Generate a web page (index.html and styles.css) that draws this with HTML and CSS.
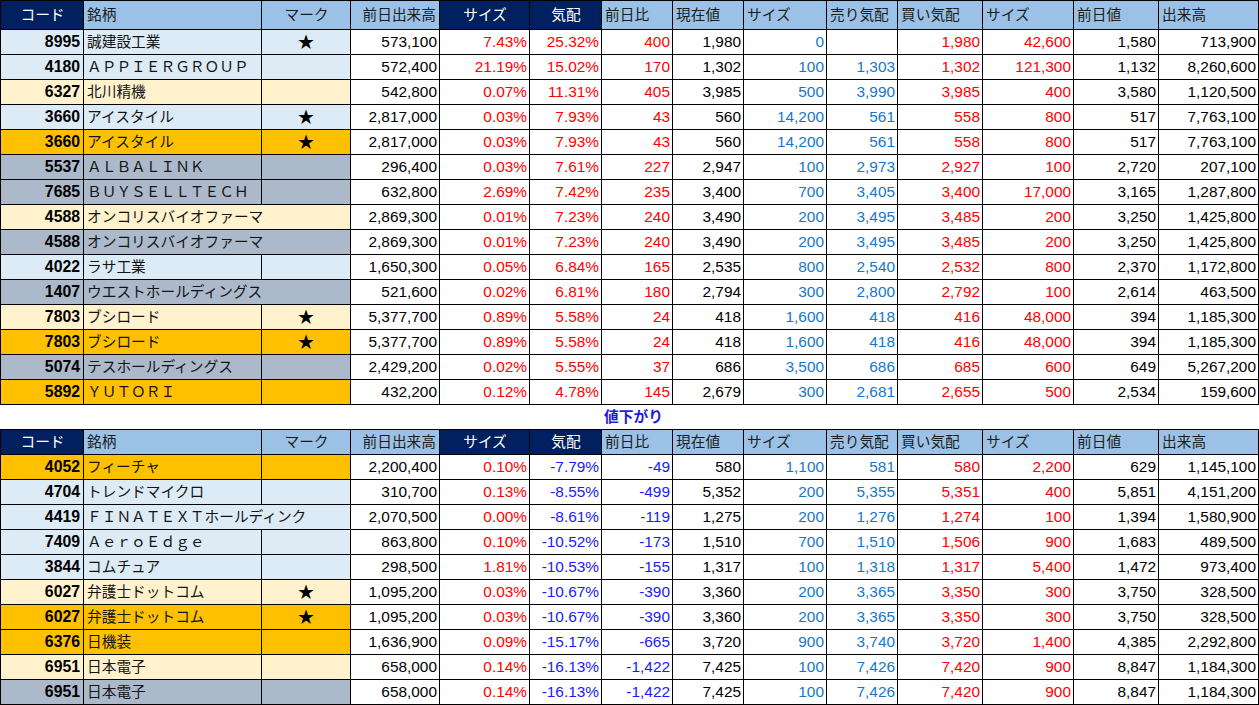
FILE: index.html
```html
<!DOCTYPE html>
<html lang="ja">
<head>
<meta charset="utf-8">
<title>値上がり・値下がり</title>
<link rel="stylesheet" href="styles.css">
</head>
<body>
<table class="grid">
<colgroup><col class="w-c"><col class="w-n"><col class="w-m"><col class="w-v"><col class="w-s"><col class="w-k"><col class="w-d"><col class="w-p"><col class="w-z"><col class="w-a"><col class="w-bid"><col class="w-z2"><col class="w-pv"><col class="w-vol"></colgroup>
<thead>
<tr class="h h1"><th class="hc">コード</th><th class="hl">銘柄</th><th class="hm">マーク</th><th class="hr">前日出来高</th><th class="hn">サイズ</th><th class="hn">気配</th><th class="hl">前日比</th><th class="hl">現在値</th><th class="hl">サイズ</th><th class="hl">売り気配</th><th class="hl">買い気配</th><th class="hl">サイズ</th><th class="hl">前日値</th><th class="hl">出来高</th></tr>
</thead>
<tbody>
<tr class="b"><td class="c">8995</td><td class="n">誠建設工業</td><td class="m">★</td><td>573,100</td><td class="r">7.43%</td><td class="r">25.32%</td><td class="r">400</td><td>1,980</td><td class="l">0</td><td class="l"></td><td class="r">1,980</td><td class="r">42,600</td><td>1,580</td><td>713,900</td></tr>
<tr class="b"><td class="c">4180</td><td class="n">ＡＰＰＩＥＲＧＲＯＵＰ</td><td class="m"></td><td>572,400</td><td class="r">21.19%</td><td class="r">15.02%</td><td class="r">170</td><td>1,302</td><td class="l">100</td><td class="l">1,303</td><td class="r">1,302</td><td class="r">121,300</td><td>1,132</td><td>8,260,600</td></tr>
<tr class="y"><td class="c">6327</td><td class="n">北川精機</td><td class="m"></td><td>542,800</td><td class="r">0.07%</td><td class="r">11.31%</td><td class="r">405</td><td>3,985</td><td class="l">500</td><td class="l">3,990</td><td class="r">3,985</td><td class="r">400</td><td>3,580</td><td>1,120,500</td></tr>
<tr class="b"><td class="c">3660</td><td class="n">アイスタイル</td><td class="m">★</td><td>2,817,000</td><td class="r">0.03%</td><td class="r">7.93%</td><td class="r">43</td><td>560</td><td class="l">14,200</td><td class="l">561</td><td class="r">558</td><td class="r">800</td><td>517</td><td>7,763,100</td></tr>
<tr class="o"><td class="c">3660</td><td class="n">アイスタイル</td><td class="m">★</td><td>2,817,000</td><td class="r">0.03%</td><td class="r">7.93%</td><td class="r">43</td><td>560</td><td class="l">14,200</td><td class="l">561</td><td class="r">558</td><td class="r">800</td><td>517</td><td>7,763,100</td></tr>
<tr class="g"><td class="c">5537</td><td class="n">ＡＬＢＡＬＩＮＫ</td><td class="m"></td><td>296,400</td><td class="r">0.03%</td><td class="r">7.61%</td><td class="r">227</td><td>2,947</td><td class="l">100</td><td class="l">2,973</td><td class="r">2,927</td><td class="r">100</td><td>2,720</td><td>207,100</td></tr>
<tr class="g"><td class="c">7685</td><td class="n">ＢＵＹＳＥＬＬＴＥＣＨ</td><td class="m"></td><td>632,800</td><td class="r">2.69%</td><td class="r">7.42%</td><td class="r">235</td><td>3,400</td><td class="l">700</td><td class="l">3,405</td><td class="r">3,400</td><td class="r">17,000</td><td>3,165</td><td>1,287,800</td></tr>
<tr class="y"><td class="c">4588</td><td class="n" colspan="2">オンコリスバイオファーマ</td><td>2,869,300</td><td class="r">0.01%</td><td class="r">7.23%</td><td class="r">240</td><td>3,490</td><td class="l">200</td><td class="l">3,495</td><td class="r">3,485</td><td class="r">200</td><td>3,250</td><td>1,425,800</td></tr>
<tr class="g"><td class="c">4588</td><td class="n" colspan="2">オンコリスバイオファーマ</td><td>2,869,300</td><td class="r">0.01%</td><td class="r">7.23%</td><td class="r">240</td><td>3,490</td><td class="l">200</td><td class="l">3,495</td><td class="r">3,485</td><td class="r">200</td><td>3,250</td><td>1,425,800</td></tr>
<tr class="b"><td class="c">4022</td><td class="n">ラサ工業</td><td class="m"></td><td>1,650,300</td><td class="r">0.05%</td><td class="r">6.84%</td><td class="r">165</td><td>2,535</td><td class="l">800</td><td class="l">2,540</td><td class="r">2,532</td><td class="r">800</td><td>2,370</td><td>1,172,800</td></tr>
<tr class="g"><td class="c">1407</td><td class="n" colspan="2">ウエストホールディングス</td><td>521,600</td><td class="r">0.02%</td><td class="r">6.81%</td><td class="r">180</td><td>2,794</td><td class="l">300</td><td class="l">2,800</td><td class="r">2,792</td><td class="r">100</td><td>2,614</td><td>463,500</td></tr>
<tr class="y"><td class="c">7803</td><td class="n">ブシロード</td><td class="m">★</td><td>5,377,700</td><td class="r">0.89%</td><td class="r">5.58%</td><td class="r">24</td><td>418</td><td class="l">1,600</td><td class="l">418</td><td class="r">416</td><td class="r">48,000</td><td>394</td><td>1,185,300</td></tr>
<tr class="o"><td class="c">7803</td><td class="n">ブシロード</td><td class="m">★</td><td>5,377,700</td><td class="r">0.89%</td><td class="r">5.58%</td><td class="r">24</td><td>418</td><td class="l">1,600</td><td class="l">418</td><td class="r">416</td><td class="r">48,000</td><td>394</td><td>1,185,300</td></tr>
<tr class="g"><td class="c">5074</td><td class="n">テスホールディングス</td><td class="m"></td><td>2,429,200</td><td class="r">0.02%</td><td class="r">5.55%</td><td class="r">37</td><td>686</td><td class="l">3,500</td><td class="l">686</td><td class="r">685</td><td class="r">600</td><td>649</td><td>5,267,200</td></tr>
<tr class="o"><td class="c">5892</td><td class="n">ＹＵＴＯＲＩ</td><td class="m"></td><td>432,200</td><td class="r">0.12%</td><td class="r">4.78%</td><td class="r">145</td><td>2,679</td><td class="l">300</td><td class="l">2,681</td><td class="r">2,655</td><td class="r">500</td><td>2,534</td><td>159,600</td></tr>
</tbody>
</table>

<div class="sep">値下がり</div>

<table class="grid">
<colgroup><col class="w-c"><col class="w-n"><col class="w-m"><col class="w-v"><col class="w-s"><col class="w-k"><col class="w-d"><col class="w-p"><col class="w-z"><col class="w-a"><col class="w-bid"><col class="w-z2"><col class="w-pv"><col class="w-vol"></colgroup>
<thead>
<tr class="h h2"><th class="hc">コード</th><th class="hl">銘柄</th><th class="hm">マーク</th><th class="hr">前日出来高</th><th class="hn">サイズ</th><th class="hn">気配</th><th class="hl">前日比</th><th class="hl">現在値</th><th class="hl">サイズ</th><th class="hl">売り気配</th><th class="hl">買い気配</th><th class="hl">サイズ</th><th class="hl">前日値</th><th class="hl">出来高</th></tr>
</thead>
<tbody>
<tr class="o"><td class="c">4052</td><td class="n">フィーチャ</td><td class="m"></td><td>2,200,400</td><td class="r">0.10%</td><td class="u">-7.79%</td><td class="u">-49</td><td>580</td><td class="l">1,100</td><td class="l">581</td><td class="r">580</td><td class="r">2,200</td><td>629</td><td>1,145,100</td></tr>
<tr class="b"><td class="c">4704</td><td class="n">トレンドマイクロ</td><td class="m"></td><td>310,700</td><td class="r">0.13%</td><td class="u">-8.55%</td><td class="u">-499</td><td>5,352</td><td class="l">200</td><td class="l">5,355</td><td class="r">5,351</td><td class="r">400</td><td>5,851</td><td>4,151,200</td></tr>
<tr class="b"><td class="c">4419</td><td class="n" colspan="2">ＦＩＮＡＴＥＸＴホールディンク</td><td>2,070,500</td><td class="r">0.00%</td><td class="u">-8.61%</td><td class="u">-119</td><td>1,275</td><td class="l">200</td><td class="l">1,276</td><td class="r">1,274</td><td class="r">100</td><td>1,394</td><td>1,580,900</td></tr>
<tr class="b"><td class="c">7409</td><td class="n">ＡｅｒｏＥｄｇｅ</td><td class="m"></td><td>863,800</td><td class="r">0.10%</td><td class="u">-10.52%</td><td class="u">-173</td><td>1,510</td><td class="l">700</td><td class="l">1,510</td><td class="r">1,506</td><td class="r">900</td><td>1,683</td><td>489,500</td></tr>
<tr class="b"><td class="c">3844</td><td class="n">コムチュア</td><td class="m"></td><td>298,500</td><td class="r">1.81%</td><td class="u">-10.53%</td><td class="u">-155</td><td>1,317</td><td class="l">100</td><td class="l">1,318</td><td class="r">1,317</td><td class="r">5,400</td><td>1,472</td><td>973,400</td></tr>
<tr class="y"><td class="c">6027</td><td class="n">弁護士ドットコム</td><td class="m">★</td><td>1,095,200</td><td class="r">0.03%</td><td class="u">-10.67%</td><td class="u">-390</td><td>3,360</td><td class="l">200</td><td class="l">3,365</td><td class="r">3,350</td><td class="r">300</td><td>3,750</td><td>328,500</td></tr>
<tr class="o"><td class="c">6027</td><td class="n">弁護士ドットコム</td><td class="m">★</td><td>1,095,200</td><td class="r">0.03%</td><td class="u">-10.67%</td><td class="u">-390</td><td>3,360</td><td class="l">200</td><td class="l">3,365</td><td class="r">3,350</td><td class="r">300</td><td>3,750</td><td>328,500</td></tr>
<tr class="o"><td class="c">6376</td><td class="n">日機装</td><td class="m"></td><td>1,636,900</td><td class="r">0.09%</td><td class="u">-15.17%</td><td class="u">-665</td><td>3,720</td><td class="l">900</td><td class="l">3,740</td><td class="r">3,720</td><td class="r">1,400</td><td>4,385</td><td>2,292,800</td></tr>
<tr class="y"><td class="c">6951</td><td class="n">日本電子</td><td class="m"></td><td>658,000</td><td class="r">0.14%</td><td class="u">-16.13%</td><td class="u">-1,422</td><td>7,425</td><td class="l">100</td><td class="l">7,426</td><td class="r">7,420</td><td class="r">900</td><td>8,847</td><td>1,184,300</td></tr>
<tr class="g"><td class="c">6951</td><td class="n">日本電子</td><td class="m"></td><td>658,000</td><td class="r">0.14%</td><td class="u">-16.13%</td><td class="u">-1,422</td><td>7,425</td><td class="l">100</td><td class="l">7,426</td><td class="r">7,420</td><td class="r">900</td><td>8,847</td><td>1,184,300</td></tr>
</tbody>
</table>
</body>
</html>
```
FILE: styles.css
```css
html, body {
  margin: 0;
  padding: 0;
  background: #ffffff;
}
body {
  font-family: "Liberation Sans", "Noto Sans CJK JP", sans-serif;
  font-size: 15.4px;
  color: #000;
}
.grid {
  table-layout: fixed;
  width: 1259px;
  border-collapse: separate;
  border-spacing: 0;
  border-left: 1px solid #000;
  border-top: 1px solid #000;
}
.w-c { width: 83px; }
.w-n { width: 178px; }
.w-m { width: 89px; }
.w-v { width: 89px; }
.w-s { width: 90px; }
.w-k { width: 72px; }
.w-d { width: 71px; }
.w-p { width: 71px; }
.w-z { width: 83px; }
.w-a { width: 71px; }
.w-bid { width: 85px; }
.w-z2 { width: 91px; }
.w-pv { width: 85px; }
.w-vol { width: 100px; }

.grid th, .grid td {
  border-right: 1px solid #000;
  border-bottom: 1px solid #000;
  padding: 0 2px 0 3px;
  line-height: 1;
  vertical-align: middle;
  white-space: nowrap;
  overflow: hidden;
}
.grid tbody tr { height: 25px; }
.h1 { height: 29px; }
.h2 { height: 25px; }

.h th {
  background: #9bc2e6;
  color: #1c1c1c;
  font-weight: normal;
  font-size: 14.7px;
  text-align: left;
}
.h th.hc {
  background: #002060;
  color: #fff;
  text-align: center;
}
.h th.hn {
  background: #002060;
  color: #fff;
  text-align: center;
}
.h th.hm { text-align: center; }
.h th.hr { text-align: right; padding-right: 3px; }

.grid td { text-align: right; }
.grid td.c {
  font-weight: bold;
  font-size: 15.8px;
  padding-right: 3px;
}
.grid td.n {
  text-align: left;
  font-size: 14.7px;
  color: #141414;
  padding-left: 3px;
}
.grid td.m {
  text-align: center;
  font-size: 16.5px;
  padding: 0;
}

.b td.c, .b td.n, .b td.m { background: #ddebf7; }
.y td.c, .y td.n, .y td.m { background: #fff2cc; }
.o td.c, .o td.n, .o td.m { background: #ffc000; }
.g td.c, .g td.n, .g td.m { background: #acb9ca; }

.grid td.r { color: #ff0000; }
.grid td.u { color: #1a1aff; }
.grid td.l { color: #1677cc; }

.sep {
  height: 24px;
  line-height: 24px;
  text-align: center;
  padding-left: 8px;
  color: #1a1ae6;
  font-weight: bold;
  font-size: 14.7px;
}
```
